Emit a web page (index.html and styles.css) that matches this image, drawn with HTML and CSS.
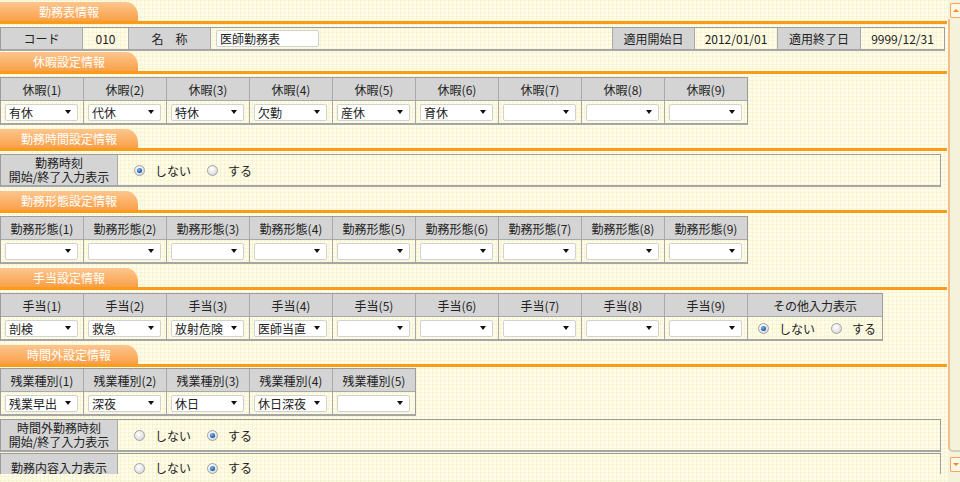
FILE: index.html
```html
<!DOCTYPE html>
<html lang="ja">
<head>
<meta charset="utf-8">
<title>勤務表情報</title>
<link rel="stylesheet" href="styles.css">
</head>
<body>
<div class="page">
  <div class="viewport">
    <div class="content">

      <section class="sec sec-first">
        <div class="sec-head"><div class="tab">勤務表情報</div></div>
        <div class="tbl tbl-main">
          <div class="h">コード</div>
          <div class="v c">010</div>
          <div class="h">名　称</div>
          <div class="v"><div class="textbox">医師勤務表</div></div>
          <div class="h">適用開始日</div>
          <div class="v c">2012/01/01</div>
          <div class="h">適用終了日</div>
          <div class="v c">9999/12/31</div>
        </div>
      </section>

      <section class="sec">
        <div class="sec-head"><div class="tab">休暇設定情報</div></div>
        <div class="tbl tbl-9">
          <div class="h">休暇(1)</div><div class="h">休暇(2)</div><div class="h">休暇(3)</div>
          <div class="h">休暇(4)</div><div class="h">休暇(5)</div><div class="h">休暇(6)</div>
          <div class="h">休暇(7)</div><div class="h">休暇(8)</div><div class="h">休暇(9)</div>
          <div class="v"><div class="sel"><span>有休</span><i></i></div></div>
          <div class="v"><div class="sel"><span>代休</span><i></i></div></div>
          <div class="v"><div class="sel"><span>特休</span><i></i></div></div>
          <div class="v"><div class="sel"><span>欠勤</span><i></i></div></div>
          <div class="v"><div class="sel"><span>産休</span><i></i></div></div>
          <div class="v"><div class="sel"><span>育休</span><i></i></div></div>
          <div class="v"><div class="sel"><span></span><i></i></div></div>
          <div class="v"><div class="sel"><span></span><i></i></div></div>
          <div class="v"><div class="sel"><span></span><i></i></div></div>
        </div>
      </section>

      <section class="sec">
        <div class="sec-head"><div class="tab">勤務時間設定情報</div></div>
        <div class="tbl tbl-radio">
          <div class="h two">勤務時刻<br>開始/終了入力表示</div>
          <div class="v radios">
            <span class="radio on"></span><span class="rl">しない</span>
            <span class="radio"></span><span class="rl">する</span>
          </div>
        </div>
      </section>

      <section class="sec">
        <div class="sec-head"><div class="tab">勤務形態設定情報</div></div>
        <div class="tbl tbl-9">
          <div class="h">勤務形態(1)</div><div class="h">勤務形態(2)</div><div class="h">勤務形態(3)</div>
          <div class="h">勤務形態(4)</div><div class="h">勤務形態(5)</div><div class="h">勤務形態(6)</div>
          <div class="h">勤務形態(7)</div><div class="h">勤務形態(8)</div><div class="h">勤務形態(9)</div>
          <div class="v"><div class="sel"><span></span><i></i></div></div>
          <div class="v"><div class="sel"><span></span><i></i></div></div>
          <div class="v"><div class="sel"><span></span><i></i></div></div>
          <div class="v"><div class="sel"><span></span><i></i></div></div>
          <div class="v"><div class="sel"><span></span><i></i></div></div>
          <div class="v"><div class="sel"><span></span><i></i></div></div>
          <div class="v"><div class="sel"><span></span><i></i></div></div>
          <div class="v"><div class="sel"><span></span><i></i></div></div>
          <div class="v"><div class="sel"><span></span><i></i></div></div>
        </div>
      </section>

      <section class="sec">
        <div class="sec-head"><div class="tab">手当設定情報</div></div>
        <div class="tbl tbl-10">
          <div class="h">手当(1)</div><div class="h">手当(2)</div><div class="h">手当(3)</div>
          <div class="h">手当(4)</div><div class="h">手当(5)</div><div class="h">手当(6)</div>
          <div class="h">手当(7)</div><div class="h">手当(8)</div><div class="h">手当(9)</div>
          <div class="h">その他入力表示</div>
          <div class="v"><div class="sel"><span>剖検</span><i></i></div></div>
          <div class="v"><div class="sel"><span>救急</span><i></i></div></div>
          <div class="v"><div class="sel"><span>放射危険</span><i></i></div></div>
          <div class="v"><div class="sel"><span>医師当直</span><i></i></div></div>
          <div class="v"><div class="sel"><span></span><i></i></div></div>
          <div class="v"><div class="sel"><span></span><i></i></div></div>
          <div class="v"><div class="sel"><span></span><i></i></div></div>
          <div class="v"><div class="sel"><span></span><i></i></div></div>
          <div class="v"><div class="sel"><span></span><i></i></div></div>
          <div class="v radios small">
            <span class="radio on"></span><span class="rl">しない</span>
            <span class="radio"></span><span class="rl">する</span>
          </div>
        </div>
      </section>

      <section class="sec sec-last">
        <div class="sec-head"><div class="tab">時間外設定情報</div></div>
        <div class="tbl tbl-5">
          <div class="h">残業種別(1)</div><div class="h">残業種別(2)</div><div class="h">残業種別(3)</div>
          <div class="h">残業種別(4)</div><div class="h">残業種別(5)</div>
          <div class="v"><div class="sel"><span>残業早出</span><i></i></div></div>
          <div class="v"><div class="sel"><span>深夜</span><i></i></div></div>
          <div class="v"><div class="sel"><span>休日</span><i></i></div></div>
          <div class="v"><div class="sel"><span>休日深夜</span><i></i></div></div>
          <div class="v"><div class="sel"><span></span><i></i></div></div>
        </div>
        <div class="tbl tbl-radio gap-top">
          <div class="h two">時間外勤務時刻<br>開始/終了入力表示</div>
          <div class="v radios">
            <span class="radio"></span><span class="rl">しない</span>
            <span class="radio on"></span><span class="rl">する</span>
          </div>
        </div>
        <div class="tbl tbl-radio tbl-last gap-top-sm">
          <div class="h">勤務内容入力表示</div>
          <div class="v radios">
            <span class="radio"></span><span class="rl">しない</span>
            <span class="radio on"></span><span class="rl">する</span>
          </div>
        </div>
      </section>

    </div>
  </div>
  <div class="scrollbar">
    <div class="sb-btn up"><i></i></div>
    <div class="sb-thumb"></div>
    <div class="sb-btn down"><i></i></div>
  </div>
</div>
</body>
</html>
```
FILE: styles.css
```css
* { box-sizing: border-box; margin: 0; padding: 0; }

html, body { height: 100%; }

body {
  margin: 0;
  font-family: "Noto Sans CJK JP", "Noto Sans", sans-serif;
  font-size: 12px;
  color: #222;
  background-color: #fefce6;
  background-image:
    linear-gradient(90deg, rgba(225, 214, 140, 0.16) 1px, transparent 1px),
    linear-gradient(rgba(225, 214, 140, 0.16) 1px, transparent 1px);
  background-size: 4px 4px;
  background-attachment: fixed;
}

.page {
  display: flex;
  height: 482px;
}

.viewport {
  width: 948px;
  height: 474px;
  overflow: hidden;
  flex: none;
}

.content {
  padding-top: 2px;
}

.sec { margin-bottom: 4px; }
.sec-first { margin-bottom: 1px; }

.sec-head {
  height: 22px;
  border-bottom: 3px solid #fa9b1a;
  margin-bottom: 3px;
  width: 947px;
}
.sec-last .sec-head { margin-bottom: 1px; }

.tab {
  width: 138px;
  height: 19px;
  line-height: 19px;
  text-align: center;
  color: #fff;
  font-size: 12px;
  background: linear-gradient(#fdc68e, #f9a048);
  border-top-right-radius: 12px 14px;
}

.tbl {
  display: grid;
  gap: 1px;
  background: #a9a9a9;
  border: 1px solid #9c9c9c;
  border-bottom: 2px solid #a6a6a6;
  width: max-content;
}

.tbl-main {
  grid-template-columns: 81px 45px 81px 401px 81px 82px 82px 83px;
  grid-auto-rows: 21px;
}
.tbl-9 {
  grid-template-columns: repeat(9, 82px);
  grid-auto-rows: 22px;
}
.tbl-10 {
  grid-template-columns: repeat(9, 82px) 134px;
  grid-auto-rows: 22px;
}
.tbl-5 {
  grid-template-columns: repeat(5, 82px);
  grid-auto-rows: 22px;
}
.tbl-radio {
  grid-template-columns: 116px 822px;
  grid-auto-rows: 30px;
}
.tbl-last { grid-auto-rows: 28px; }
.tbl-last .h,
.tbl-last .v { line-height: 12px; padding-top: 0; }
.tbl-last .rl { line-height: 12px; }

.gap-top { margin-top: 3px; }
.gap-top-sm { margin-top: 1px; }

.h {
  background: #d4d4d4;
  display: flex;
  align-items: center;
  justify-content: center;
  text-align: center;
  white-space: nowrap;
  color: #222;
}
.h.two { line-height: 14px; font-size: 12px; }

.v {
  background-color: #fefce6;
  background-image:
    linear-gradient(90deg, rgba(225, 214, 140, 0.16) 1px, transparent 1px),
    linear-gradient(rgba(225, 214, 140, 0.16) 1px, transparent 1px);
  background-size: 4px 4px;
  background-attachment: fixed;
  display: flex;
  align-items: center;
  padding-left: 4px;
  white-space: nowrap;
}
.v.c { justify-content: center; padding-left: 0; }

.textbox {
  width: 103px;
  height: 17px;
  margin-left: 1px;
  background: #fff;
  border: 1px solid #d0d0d0;
  border-radius: 2px;
  line-height: 15px;
  padding-left: 3px;
}

.sel {
  width: 73px;
  height: 17px;
  background: #fff;
  border: 1px solid #d2d2d2;
  border-radius: 2px;
  display: flex;
  align-items: center;
  justify-content: space-between;
  padding: 0 6px 0 3px;
  line-height: 15px;
  white-space: nowrap;
}
.sel i {
  width: 0;
  height: 0;
  border-left: 3px solid transparent;
  border-right: 3px solid transparent;
  border-top: 4px solid #111;
  flex: none;
}

.radios { padding-left: 16px; }
.radios.small { padding-left: 10px; }
.radio {
  width: 11px;
  height: 11px;
  border-radius: 50%;
  border: 1px solid #a3a3a3;
  background: radial-gradient(circle at 40% 35%, #ffffff 0, #e6e6e6 55%, #c9c9c9 100%);
  position: relative;
  flex: none;
}
.radio.on::after {
  content: "";
  position: absolute;
  left: 2px;
  top: 2px;
  width: 5px;
  height: 5px;
  border-radius: 50%;
  background: radial-gradient(circle at 40% 35%, #7fb6ec 0, #1f64b4 60%, #143f7a 100%);
}
.rl { margin-left: 10px; margin-right: 16px; }

.scrollbar {
  width: 12px;
  flex: none;
  display: flex;
  flex-direction: column;
  background: #f4f2db;
}
.sb-btn {
  height: 15px;
  margin-left: 2px;
  border: 1px solid #f6a460;
  border-right: none;
  border-radius: 2px 0 0 2px;
  background: #fdf7e6;
  display: flex;
  align-items: center;
  justify-content: center;
}
.sb-btn.up { margin-top: 3px; }
.sb-btn.down { margin-top: 5px; }
.sb-btn i {
  width: 0;
  height: 0;
  border-left: 3px solid transparent;
  border-right: 3px solid transparent;
}
.sb-btn.up i { border-bottom: 3px solid #f08a30; }
.sb-btn.down i { border-top: 3px solid #f08a30; }
.sb-thumb {
  height: 433px;
  margin-top: 1px;
  border-left: 2px solid #f8bc8a;
  border-bottom: 2px solid #d4d0b8;
  border-bottom-left-radius: 5px;
  background: #f4f2db;
}
```
